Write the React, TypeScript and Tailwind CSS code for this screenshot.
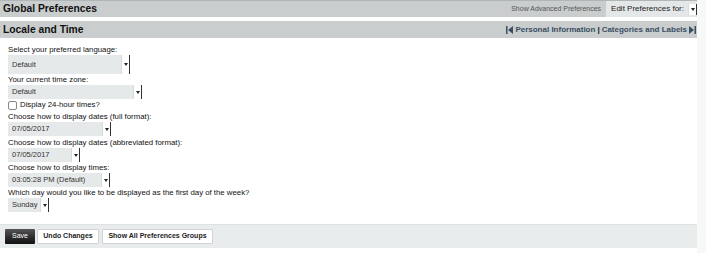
import React from "react";

function Arrow() {
  return (
    <span className="flex h-full w-[8px] items-center justify-center border-r border-r-[#333] bg-white shadow-[-1px_0_0_#d6dada]">
      <svg width="4" height="3" viewBox="0 0 4 3">
        <path d="M0 0h4L2 3z" fill="#222" />
      </svg>
    </span>
  );
}

function FakeSelect({ value, width, tall }: { value: string; width: string; tall?: boolean }) {
  return (
    <div className={`flex ${tall ? "h-[19px]" : "h-[14px]"} ${width} items-stretch bg-[#e6e9e9]`}>
      <span className="flex flex-1 items-center whitespace-nowrap pl-[4px] text-[7.5px] text-[#333]">{value}</span>
      <Arrow />
    </div>
  );
}

function Field({ label, value, width, tall }: { label: string; value: string; width: string; tall?: boolean }) {
  return (
    <div className="flex flex-col">
      <p className="h-[11px] whitespace-nowrap text-[7.8px] leading-[11px] text-[#111]">{label}</p>
      <FakeSelect value={value} width={width} tall={tall} />
    </div>
  );
}

export default function App() {
  return (
    <div className="flex h-[253px] w-[706px] bg-[#f7f8f8] font-[family-name:Liberation_Sans,Arial,sans-serif]">
      <div className="flex w-[697px] flex-col bg-white">
        <div className="flex h-[17px] items-center justify-between border-t border-[#b0b6b6] bg-[#c9cdcd] pl-[3px]">
          <h1 className="text-[10.3px] font-bold text-[#111]">Global Preferences</h1>
          <div className="flex h-full items-center">
            <span className="mr-[5px] text-[7px] text-[#555]">Show Advanced Preferences</span>
            <div className="flex h-full items-center bg-[#e4e7e7] pl-[5px]">
              <span className="text-[8px] text-[#222]">Edit Preferences for:</span>
              <span className="ml-[5px] h-[11px]">
                <Arrow />
              </span>
            </div>
          </div>
        </div>
        <div className="h-[4px] bg-white" />
        <div className="flex h-[17px] items-center justify-between bg-[#c9cdcd] pl-[3px] pr-[1px]">
          <h2 className="text-[10.3px] font-bold text-[#111]">Locale and Time</h2>
          <div className="flex items-center gap-[2px] text-[8px] font-bold text-[#3a4f63]">
            <svg width="7" height="8" viewBox="0 0 7 8">
              <rect x="0" y="0" width="1.5" height="8" fill="#3a4f63" />
              <path d="M7 0v8L2 4z" fill="#3a4f63" />
            </svg>
            <span>Personal Information</span>
            <span className="text-[#222]">|</span>
            <span>Categories and Labels</span>
            <svg width="7" height="8" viewBox="0 0 7 8">
              <path d="M0 0v8L5 4z" fill="#3a4f63" />
              <rect x="5.5" y="0" width="1.5" height="8" fill="#3a4f63" />
            </svg>
          </div>
        </div>
        <div className="flex flex-col px-[8px] pt-[6px]">
          <Field label="Select your preferred language:" value="Default" width="w-[122px]" tall />
          <Field label="Your current time zone:" value="Default" width="w-[134px]" />
          <label className="flex h-[12px] items-center gap-[3px] text-[7.8px] text-[#111]">
            <span className="h-[9px] w-[9px] rounded-[2px] border border-[#888] bg-white" />
            Display 24-hour times?
          </label>
          <Field label="Choose how to display dates (full format):" value="07/05/2017" width="w-[103px]" />
          <div className="mt-[1px]">
            <Field label="Choose how to display dates (abbreviated format):" value="07/05/2017" width="w-[72px]" />
          </div>
          <Field label="Choose how to display times:" value="03:05:28 PM (Default)" width="w-[102px]" />
          <Field label="Which day would you like to be displayed as the first day of the week?" value="Sunday" width="w-[41px]" />
        </div>
        <div className="mt-[12px] flex h-[24px] items-center gap-[2px] border-t border-[#dde2e2] bg-[#e8ecec] pl-[5px]">
          <button className="h-[15px] w-[30px] whitespace-nowrap rounded-[1px] bg-gradient-to-b from-[#555] to-[#111] text-[7px] text-white">
            Save
          </button>
          <button className="h-[15px] w-[62px] whitespace-nowrap rounded-[1px] border border-[#cfd3d3] bg-white text-[7px] font-bold text-[#222]">
            Undo Changes
          </button>
          <button className="ml-[1px] h-[15px] w-[111px] whitespace-nowrap rounded-[1px] border border-[#cfd3d3] bg-white text-[7px] font-bold text-[#222]">
            Show All Preferences Groups
          </button>
        </div>
      </div>
    </div>
  );
}
